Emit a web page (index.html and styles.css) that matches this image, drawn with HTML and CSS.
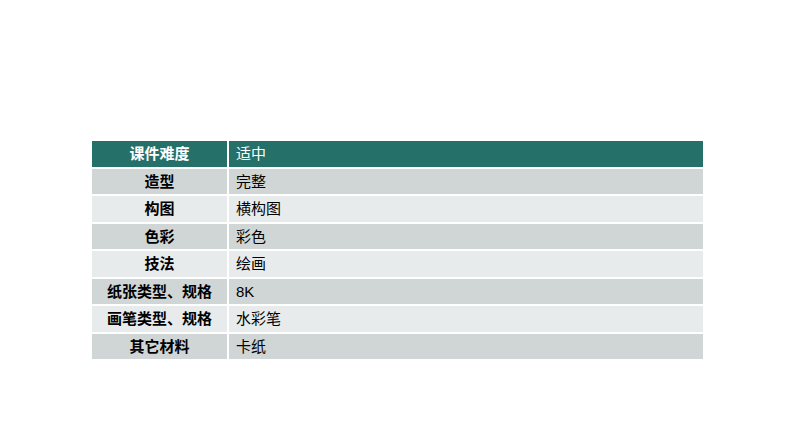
FILE: index.html
```html
<!DOCTYPE html>
<html lang="zh">
<head>
<meta charset="utf-8">
<link rel="stylesheet" href="styles.css">
</head>
<body>
<div class="table">
  <div class="row head"><div class="k">课件难度</div><div class="v">适中</div></div>
  <div class="row dark"><div class="k">造型</div><div class="v">完整</div></div>
  <div class="row light"><div class="k">构图</div><div class="v">横构图</div></div>
  <div class="row dark"><div class="k">色彩</div><div class="v">彩色</div></div>
  <div class="row light"><div class="k">技法</div><div class="v">绘画</div></div>
  <div class="row dark"><div class="k">纸张类型、规格</div><div class="v">8K</div></div>
  <div class="row light"><div class="k">画笔类型、规格</div><div class="v">水彩笔</div></div>
  <div class="row dark"><div class="k">其它材料</div><div class="v">卡纸</div></div>
</div>
</body>
</html>
```
FILE: styles.css
```css
html, body {
  margin: 0;
  padding: 0;
  background: #ffffff;
}
body {
  font-family: "Liberation Sans", "Noto Sans CJK SC", sans-serif;
  font-size: 15px;
  color: #000;
}
.table {
  margin: 141px 0 0 92px;
  width: 611px;
  display: flex;
  flex-direction: column;
  gap: 2px;
}
.row {
  display: grid;
  grid-template-columns: 135px 1fr;
  column-gap: 2px;
  height: 25.5px;
}
.row > div {
  display: flex;
  align-items: center;
  line-height: 1;
}
.k {
  justify-content: center;
  font-weight: bold;
}
.v {
  padding-left: 7px;
}
.head > div {
  background: #26706a;
  color: #ffffff;
}
.dark > div {
  background: #d0d6d5;
}
.light > div {
  background: #e8ebeb;
}
```
